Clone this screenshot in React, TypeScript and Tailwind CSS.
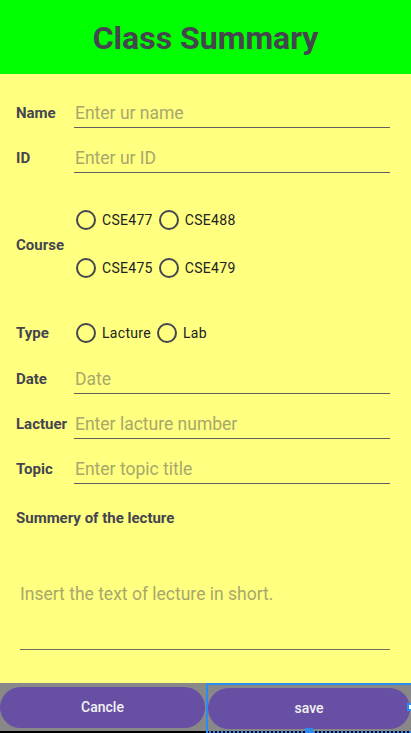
import React from "react";

const font = { fontFamily: "Roboto, 'Noto Sans', sans-serif" };

function Radio({ label }: { label: string }) {
  return (
    <div className="flex items-center">
      <div className="w-[20px] h-[20px] rounded-full border-2 border-[#45454f]" />
      <span className="ml-[6px] mr-[6px] text-[14px] text-[#222222] tracking-[0.3px]">{label}</span>
    </div>
  );
}

function Field({ label, placeholder, className = "" }: { label: string; placeholder: string; className?: string }) {
  return (
    <div className={"flex items-center h-[30px] " + className}>
      <div className="w-[58px] text-[15px] font-bold text-[#45454f] whitespace-nowrap">{label}</div>
      <div className="flex-1 h-[30px] flex items-center border-b border-[#5f5f5f] mr-[21px]">
        <span className="text-[17.5px] text-[#a8a76c] leading-none pl-[1px] mt-[2px]">{placeholder}</span>
      </div>
    </div>
  );
}

export default function App() {
  return (
    <div className="w-[411px] h-[733px] flex flex-col bg-[#ffff80] overflow-hidden" style={font}>
      <div className="h-[74px] bg-[#00ff00] flex items-center justify-center">
        <h1 className="text-[32px] font-bold text-[#45454f] mt-[2px]">Class Summary</h1>
      </div>
      <div className="flex-1 flex flex-col pl-[16px] pt-[24px]">
        <Field label="Name" placeholder="Enter ur name" />
        <Field label="ID" placeholder="Enter ur ID" className="mt-[15px]" />
        <div className="flex items-center mt-[23px] h-[96px]">
          <div className="w-[58px] text-[15px] font-bold text-[#45454f] mt-[2px]">Course</div>
          <div className="flex flex-col">
            <div className="h-[48px] flex items-center pl-[2px]">
              <Radio label="CSE477" />
              <Radio label="CSE488" />
            </div>
            <div className="h-[48px] flex items-center pl-[2px]">
              <Radio label="CSE475" />
              <Radio label="CSE479" />
            </div>
          </div>
        </div>
        <div className="flex items-center mt-[17px] h-[48px]">
          <div className="w-[58px] text-[15px] font-bold text-[#45454f]">Type</div>
          <div className="flex items-center pl-[2px]">
            <Radio label="Lacture" />
            <Radio label="Lab" />
          </div>
        </div>
        <Field label="Date" placeholder="Date" className="mt-[7px]" />
        <Field label="Lactuer" placeholder="Enter lacture number" className="mt-[15px]" />
        <Field label="Topic" placeholder="Enter topic title" className="mt-[15px]" />
        <div className="mt-[25px] text-[15px] font-bold text-[#45454f] leading-[18px]">Summery of the lecture</div>
        <div className="mt-[8px] ml-[4px] mr-[21px] h-[115px] flex items-center border-b border-[#6f6f5f]">
          <span className="text-[17.5px] text-[#a8a76c] mt-[4px]">Insert the text of lecture in short.</span>
        </div>
      </div>
      <div className="h-[48px] bg-[#888888] flex items-center">
        <div className="w-[205px] h-[41px] rounded-full bg-[#6750a4] flex items-center justify-center text-[14px] font-medium text-[#f2f2f2]">
          Cancle
        </div>
        <div className="relative ml-[1px] flex-1 h-[48px] flex items-center border-l-2 border-t-2 border-[#2a8cf0]">
          <div className="ml-[0px] mr-[1px] flex-1 h-[41px] rounded-full bg-[#6750a4] flex items-center justify-center text-[14px] font-medium text-[#f2f2f2]">
            save
          </div>
          <div className="absolute right-[-2px] top-[18px] w-[6px] h-[8px] border-2 border-[#2a8cf0] bg-white" />
          <div className="absolute left-[97px] bottom-[-3px] w-[8px] h-[6px] bg-[#2a8cf0]" />
        </div>
      </div>
      <div className="h-[2px] bg-black flex">
        <div className="w-[206px]" />
        <div className="flex-1 border-b-2 border-dotted border-[#2a8cf0]" />
      </div>
    </div>
  );
}
